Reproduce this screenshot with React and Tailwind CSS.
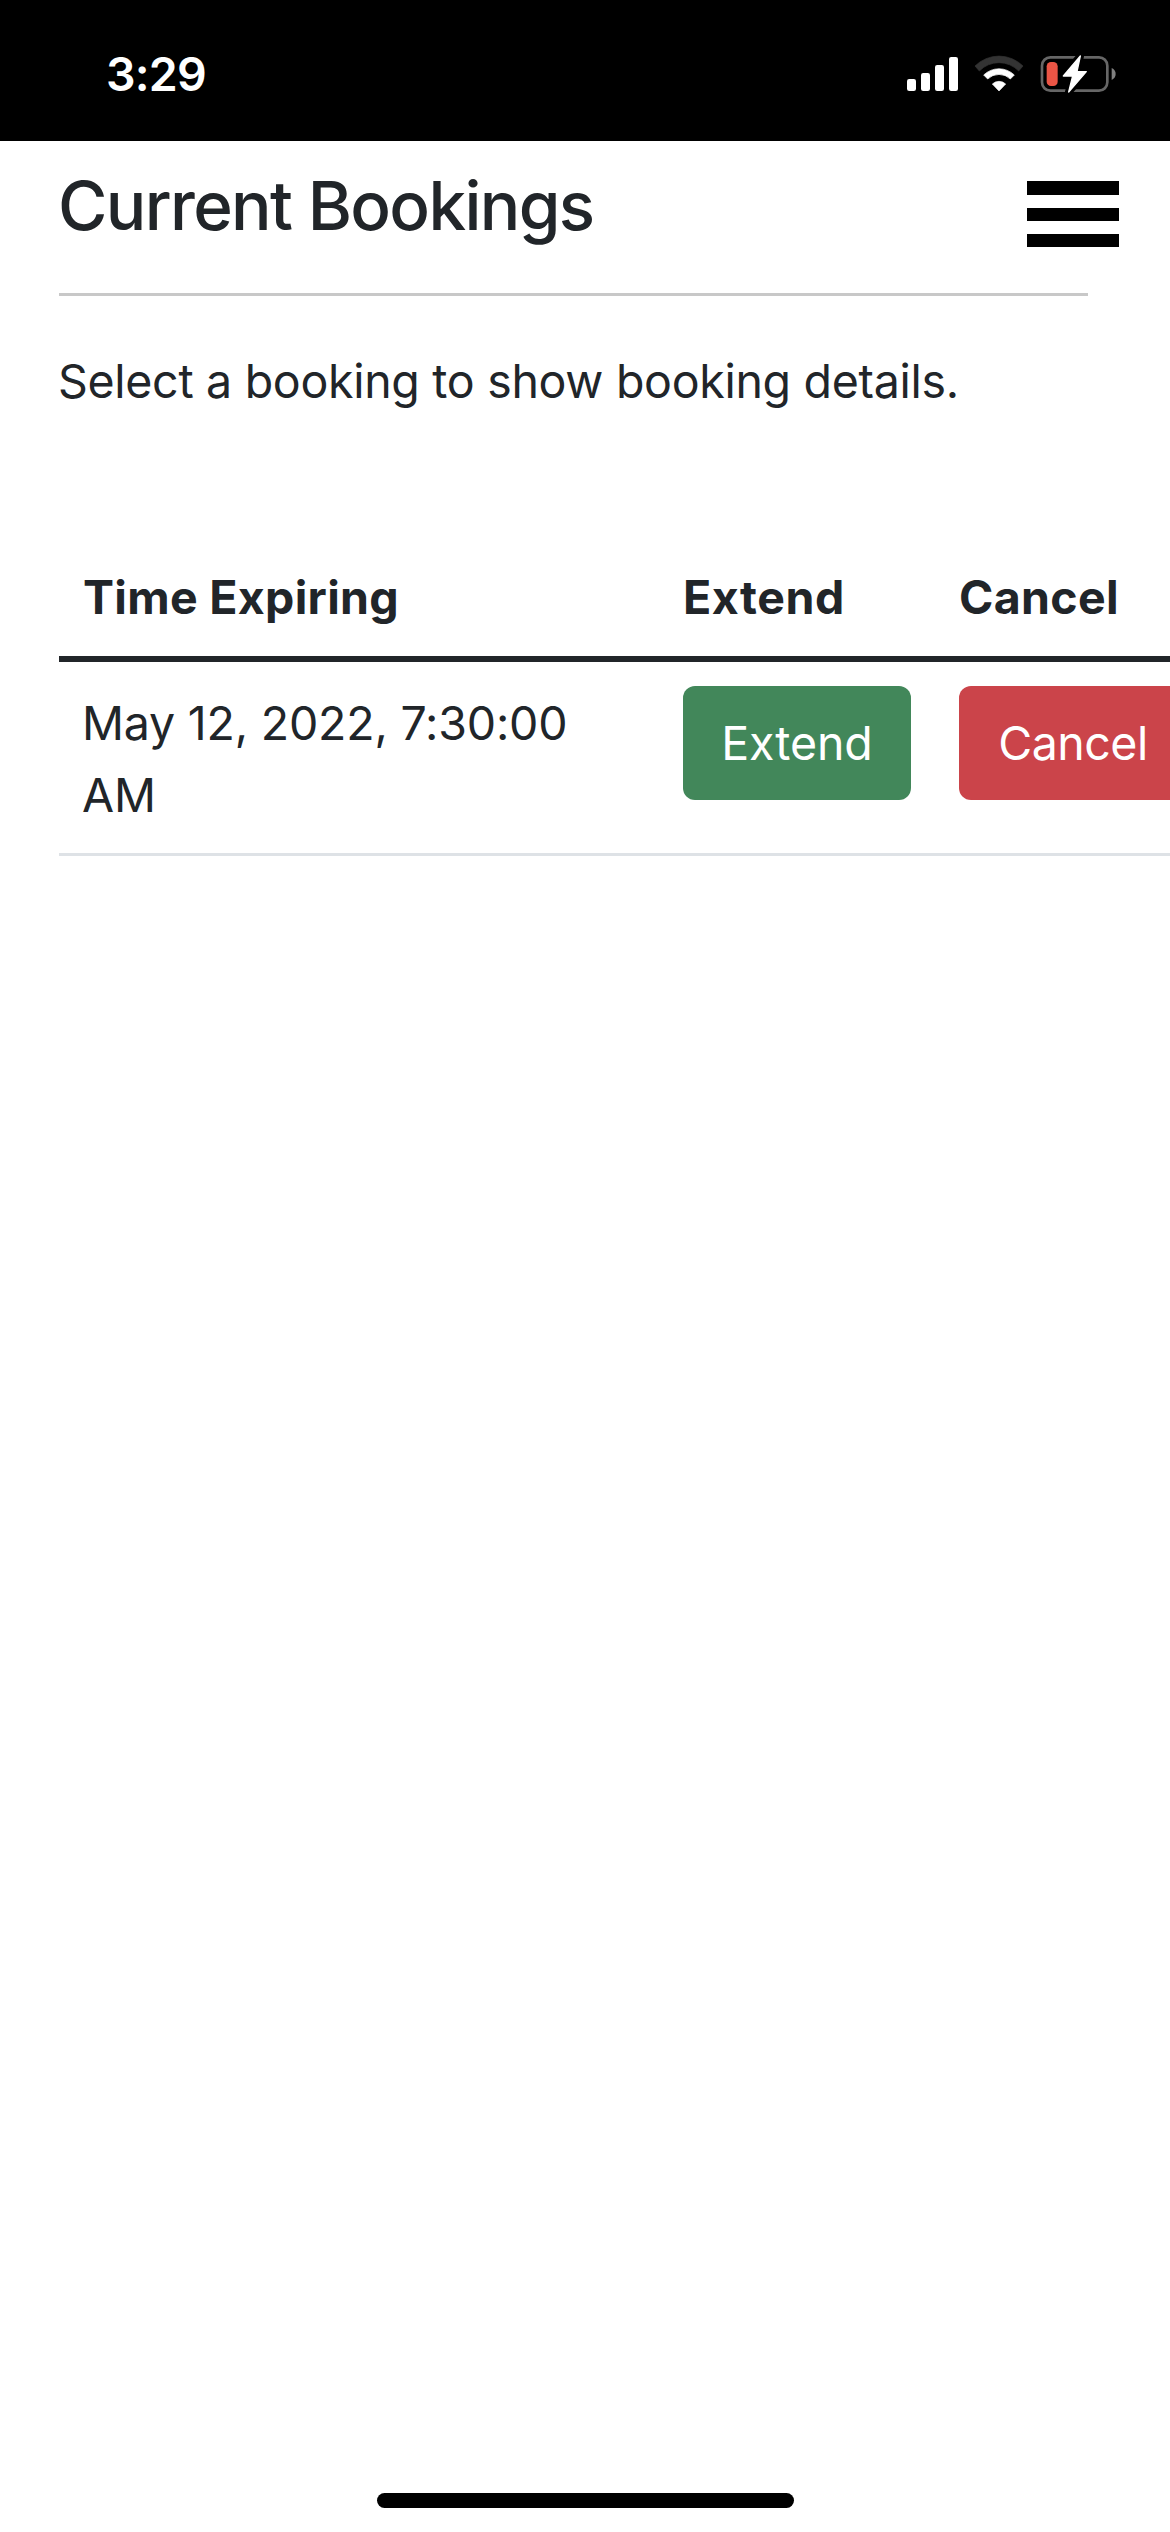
function SignalIcon() {
  return (
    <svg className="h-[34px] w-[52px]" viewBox="0 0 52 34" fill="#fff">
      <rect x="0" y="22" width="9" height="12" rx="2.2" />
      <rect x="14" y="16" width="9" height="18" rx="2.2" />
      <rect x="28" y="8" width="9" height="26" rx="2.2" />
      <rect x="42" y="0" width="9" height="34" rx="2.2" />
    </svg>
  );
}

function WifiIcon() {
  return (
    <svg className="h-[37px] w-[50px]" viewBox="282 74 150 111" strokeWidth="2" strokeLinejoin="round">
      <path
        d="M285 107 A102 102 0 0 1 429 107 L416 122 A82 82 0 0 0 298 122 Z"
        fill="#333"
        stroke="#333"
      />
      <path
        d="M311 134 A66 66 0 0 1 403 134 L391 146 A49 49 0 0 0 323 146 Z"
        fill="#fff"
        stroke="#fff"
      />
      <path d="M337 161 A29 29 0 0 1 377 161 L357 182 Z" fill="#fff" stroke="#fff" />
    </svg>
  );
}

function BatteryIcon() {
  return (
    <svg className="h-[40px] w-[77px]" viewBox="478 72 231 120">
      <rect x="484" y="82" width="196" height="100" rx="25" fill="none" stroke="#666" strokeWidth="8" />
      <path d="M693 114 C701 118 705 124 705 132 C705 140 701 146 693 150 Z" fill="#808080" />
      <path
        d="M599 78 L548 138 H576 L564 186 L617 125 H589 Z"
        fill="#000"
        stroke="#000"
        strokeWidth="22"
        strokeLinejoin="round"
      />
      <rect x="498" y="96" width="33" height="72" rx="13" fill="#eb5545" />
      <path
        d="M599 78 L548 138 H576 L564 186 L617 125 H589 Z"
        fill="#fff"
        stroke="#fff"
        strokeWidth="4"
        strokeLinejoin="round"
      />
    </svg>
  );
}

function StatusBar() {
  return (
    <header className="flex h-[141px] shrink-0 items-start justify-between bg-black pl-[106px] text-white">
      <span className="mt-[39px] text-[46.5px] leading-[70px] font-semibold tracking-[-0.8px]">3:29</span>
      <div className="flex pr-[53px]">
        <div className="mt-[57px]">
          <SignalIcon />
        </div>
        <div className="mt-[54.7px] ml-[15px]">
          <WifiIcon />
        </div>
        <div className="mt-[54px] ml-[15.6px]">
          <BatteryIcon />
        </div>
      </div>
    </header>
  );
}

function MenuButton() {
  return (
    <button aria-label="Menu" className="mt-[40px] flex h-[66px] w-[92px] flex-col justify-between">
      <span className="h-[14px] w-full bg-black" />
      <span className="h-[13px] w-full bg-black" />
      <span className="h-[13px] w-full bg-black" />
    </button>
  );
}

const bookings = [{ id: 1, expires: "May 12, 2022, 7:30:00 AM" }];

export default function App() {
  return (
    <div className="flex h-[2532px] w-[1170px] flex-col overflow-hidden bg-white font-['Inter',sans-serif] text-[46.5px] leading-[72px] text-[#212529]">
      <StatusBar />
      <main className="flex-1 pl-[59px]">
        <div className="flex h-[152px] items-start justify-between pr-[51px]">
          <h1 className="-ml-px pt-[23px] text-[67.4px] leading-[83px] font-medium tracking-[-1.63px]">
            Current Bookings
          </h1>
          <MenuButton />
        </div>
        <hr className="h-[3px] w-[1029px] border-0 bg-[#c8c8c8]" />
        <p className="mt-[49px] -ml-px tracking-[-0.3px]">Select a booking to show booking details.</p>
        <table className="mt-[119px] w-[1152px] table-fixed border-collapse text-left">
          <colgroup>
            <col className="w-[600px]" />
            <col className="w-[276px]" />
            <col className="w-[276px]" />
          </colgroup>
          <thead>
            <tr className="h-[120px] font-bold">
              <th className="px-6 pt-[25px] pb-[23px] tracking-[0.3px]">Time Expiring</th>
              <th className="px-6 pt-[25px] pb-[23px] tracking-[0.6px]">Extend</th>
              <th className="px-6 pt-[25px] pb-[23px] tracking-[0.3px]">Cancel</th>
            </tr>
            <tr>
              <td colSpan={3} className="h-[6px] bg-[#212529] p-0" />
            </tr>
          </thead>
          <tbody>
            {bookings.map((b) => (
              <tr key={b.id} className="align-top">
                <td className="pt-[25px] pr-6 pb-[22px] pl-[23px] tracking-[-0.2px]">{b.expires}</td>
                <td className="px-6 pt-6">
                  <button className="block h-[114px] w-[228px] rounded-xl bg-[#42875a] text-center tracking-[-0.1px] text-white">
                    Extend
                  </button>
                </td>
                <td className="px-6 pt-6">
                  <button className="block h-[114px] w-[228px] rounded-xl bg-[#cb444a] text-center tracking-[-0.5px] text-white">
                    Cancel
                  </button>
                </td>
              </tr>
            ))}
            <tr>
              <td colSpan={3} className="h-[3px] bg-[#dee2e6] p-0" />
            </tr>
          </tbody>
        </table>
      </main>
      <footer className="flex h-[39px] shrink-0 justify-center">
        <div className="h-[15px] w-[417px] rounded-full bg-black" />
      </footer>
    </div>
  );
}
